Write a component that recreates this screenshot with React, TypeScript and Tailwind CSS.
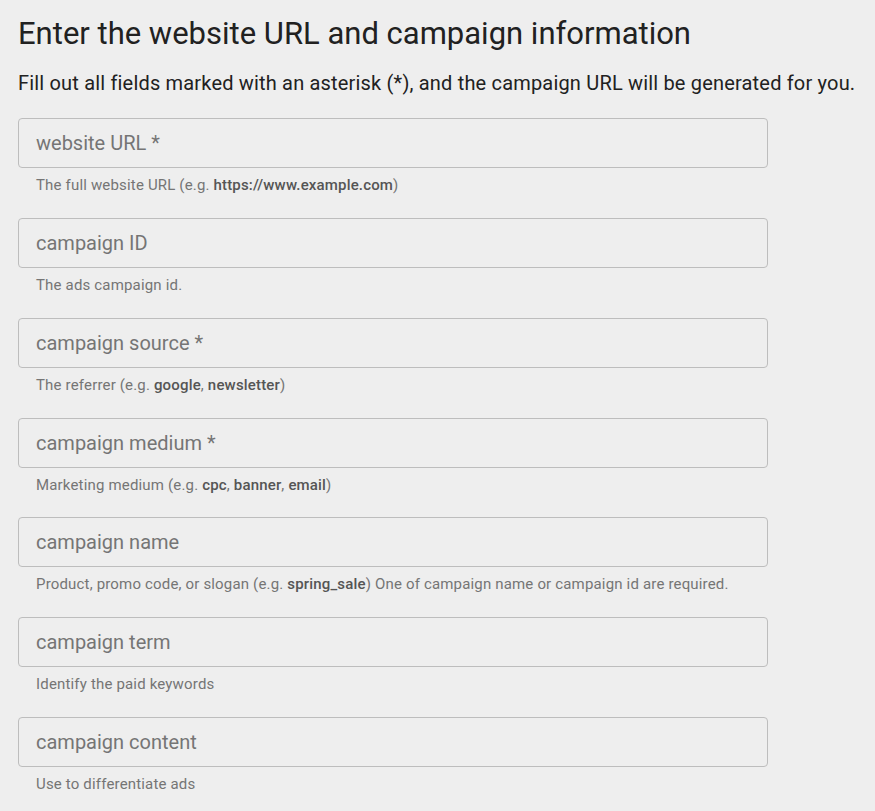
import React from "react";

type Field = { label: string; help: React.ReactNode };

const B = ({ children }: { children: React.ReactNode }) => (
  <span className="font-medium text-[#555555]">{children}</span>
);

const fields: Field[] = [
  {
    label: "website URL *",
    help: (
      <>
        The full website URL (e.g. <B>https://www.example.com</B>)
      </>
    ),
  },
  { label: "campaign ID", help: <>The ads campaign id.</> },
  {
    label: "campaign source *",
    help: (
      <>
        The referrer (e.g. <B>google</B>, <B>newsletter</B>)
      </>
    ),
  },
  {
    label: "campaign medium *",
    help: (
      <>
        Marketing medium (e.g. <B>cpc</B>, <B>banner</B>, <B>email</B>)
      </>
    ),
  },
  {
    label: "campaign name",
    help: (
      <>
        Product, promo code, or slogan (e.g. <B>spring_sale</B>) One of campaign name or campaign id are required.
      </>
    ),
  },
  { label: "campaign term", help: <>Identify the paid keywords</> },
  { label: "campaign content", help: <>Use to differentiate ads</> },
];

export default function App() {
  return (
    <div
      className="min-h-[811px] bg-[#eeeeee] px-[18px] pt-[14px]"
      style={{ fontFamily: "Roboto, 'Liberation Sans', sans-serif" }}
    >
      <h1 className="text-[31px] leading-[40px] text-[#212121] font-normal">
        Enter the website URL and campaign information
      </h1>
      <p className="mt-[17px] text-[20px] leading-[24px] tracking-[0.18px] text-[#212121]">
        Fill out all fields marked with an asterisk (*), and the campaign URL will be generated for you.
      </p>
      <div className="mt-[23px] flex flex-col gap-[22.85px]">
        {fields.map((f) => (
          <div key={f.label} className="w-[750px]">
            <input
              placeholder={f.label}
              className="block h-[50px] w-full rounded-[4px] border border-[#bdbdbd] bg-transparent px-[17px] text-[20px] text-[#212121] placeholder:text-[#757575] outline-none"
            />
            <div className="mt-[7px] pl-[18px] text-[15px] leading-[20px] tracking-[0.17px] text-[#757575]">
              {f.help}
            </div>
          </div>
        ))}
      </div>
    </div>
  );
}
